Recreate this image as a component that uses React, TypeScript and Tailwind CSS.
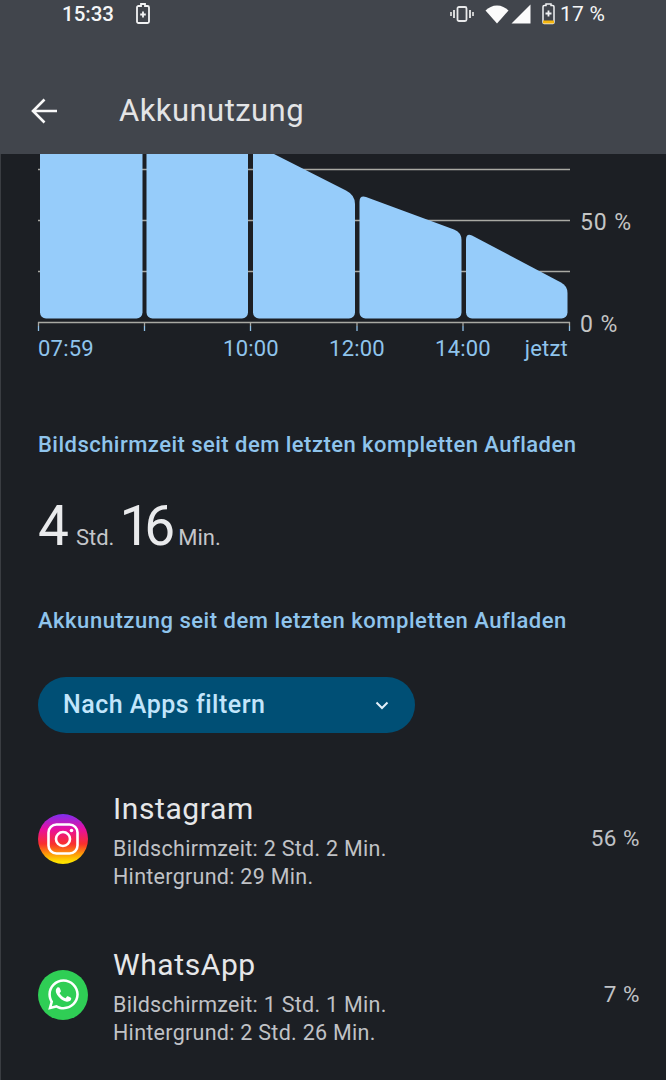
import { FaWhatsapp } from "react-icons/fa";

const sans = "font-['Roboto',sans-serif]";

function BatteryCharging() {
  return (
    <svg width="14" height="22" viewBox="0 0 14 22" fill="none">
      <path d="M5 1h4v2h2.500c.8 0 1.500.7 1.500 1.500v14c0 .8-.7 1.500-1.500 1.500h-9C1.700 20 1 19.300 1 18.500v-14C1 3.700 1.700 3 2.500 3H5z" stroke="#f2f3f4" strokeWidth="1.800" />
      <path d="M7 8.500v6M4.200 11.500h5.600" stroke="#f2f3f4" strokeWidth="1.800" />
    </svg>
  );
}

function StatusRight() {
  return (
    <div className="flex items-center">
      <svg width="24" height="16" viewBox="0 0 24 16" fill="none" className="mr-[11px]">
        <rect x="7.500" y="1" width="9" height="14" rx="1.500" stroke="#e8e9ea" strokeWidth="1.800" />
        <path d="M4 4v8M20 4v8" stroke="#d8d9da" strokeWidth="2" />
        <path d="M1 6v4M23 6v4" stroke="#c8c9ca" strokeWidth="2" />
      </svg>
      <svg width="24" height="19" viewBox="0 0 24 19" className="mr-[2px]">
        <path d="M12 18.500 0.500 5.500C3.500 2.500 7.500 .500 12 .500s8.500 2 11.500 5z" fill="#fbfbfb" />
      </svg>
      <svg width="20" height="20" viewBox="0 0 20 20" className="mr-[11px]">
        <path d="M19.500 .500V19.500H.500z" fill="#fbfbfb" />
      </svg>
      <svg width="13" height="22" viewBox="0 0 13 22" fill="none" className="mr-[5px]">
        <path d="M4 1h5v1.500h1.800c.7 0 1.200.5 1.200 1.200v15.600c0 .7-.5 1.200-1.200 1.200H2.200c-.7 0-1.200-.5-1.200-1.200V3.700c0-.7.5-1.200 1.200-1.200H4z" stroke="#f0f1f2" strokeWidth="1.500" />
        <rect x="1" y="17.500" width="11" height="3" fill="#f5b60f" />
        <path d="M6.500 7.500v6M3.500 10.500h6" stroke="#f0f1f2" strokeWidth="1.800" />
      </svg>
      <span className="text-[21px] leading-none text-[#f5f6f7] tracking-[0.2px]">17 %</span>
    </div>
  );
}

function Chart() {
  const grid = [169.5, 220.5, 271.5];
  const ticks = [38.5, 144.5, 250.5, 357, 463, 569.5];
  const labels: [number, string, "start" | "middle" | "end"][] = [
    [38, "07:59", "start"],
    [251, "10:00", "middle"],
    [357, "12:00", "middle"],
    [463, "14:00", "middle"],
    [568, "jetzt", "end"],
  ];
  return (
    <svg width="666" height="210" viewBox="0 154 666 210" className="block" style={{ fontFamily: "Roboto, sans-serif" }}>
      {grid.map((y) => (
        <line key={y} x1="38" x2="570" y1={y} y2={y} stroke="#a9a9a3" strokeWidth="1.500" />
      ))}
      <line x1="38" x2="570" y1="322.500" y2="322.500" stroke="#a9a9a3" strokeWidth="1.500" />
      {ticks.map((x) => (
        <g key={x}>
          <line x1={x} x2={x} y1="322" y2="326" stroke="#a9a9a3" strokeWidth="1.300" />
          <line x1={x} x2={x} y1="326" y2="331" stroke="#8fbfe6" strokeWidth="1.300" />
        </g>
      ))}
      <g fill="#96ccfa">
        <path d="M40 154H142.500V312.500a6 6 0 0 1-6 6H46a6 6 0 0 1-6-6z" />
        <path d="M146.500 154H248V312.500a6 6 0 0 1-6 6H152.500a6 6 0 0 1-6-6z" />
        <path d="M253 154H274L346 190.500Q355 195 355 204V312.500a6 6 0 0 1-6 6H259a6 6 0 0 1-6-6z" />
        <path d="M359.500 202Q359.500 195 366 197L454 229.500Q461.500 232.500 461.500 240V312.500a6 6 0 0 1-6 6H365.500a6 6 0 0 1-6-6z" />
        <path d="M466 240Q466 233 472 235.500L561 282.500Q567.500 286 567.500 293V312.500a6 6 0 0 1-6 6H472a6 6 0 0 1-6-6z" />
      </g>
      {labels.map(([x, t, a]) => (
        <text key={t} x={x} y="356" textAnchor={a} fontSize="22" fill="#8fc4ec" letterSpacing="0.2">
          {t}
        </text>
      ))}
      <text x="580" y="230" fontSize="23" fill="#c4c5c5" letterSpacing="0.9">50 %</text>
      <text x="580" y="332" fontSize="23" fill="#c4c5c5" letterSpacing="0.9">0 %</text>
    </svg>
  );
}

function InstagramIcon() {
  return (
    <svg width="50" height="50" viewBox="0 0 50 50" className="shrink-0 mb-[4px]">
      <defs>
        <linearGradient id="ig" x1="0.500" y1="0" x2="0.500" y2="1">
          <stop offset="0" stopColor="#7d2ff0" />
          <stop offset="0.300" stopColor="#e80fa0" />
          <stop offset="0.600" stopColor="#f9302c" />
          <stop offset="0.800" stopColor="#fd9a08" />
          <stop offset="0.950" stopColor="#ffe000" />
        </linearGradient>
      </defs>
      <circle cx="25" cy="25" r="25" fill="url(#ig)" />
      <rect x="10.500" y="10.500" width="29" height="29" rx="8" fill="none" stroke="#fff" strokeWidth="2.600" />
      <circle cx="25" cy="25" r="7" fill="none" stroke="#fff" strokeWidth="2.600" />
      <circle cx="33.500" cy="16.500" r="1.800" fill="#fff" />
    </svg>
  );
}

function WhatsAppIcon() {
  return (
    <div className="w-[50px] h-[50px] shrink-0 mb-[4px] rounded-full bg-[#2fce55] flex items-center justify-center">
      <FaWhatsapp size={35} color="#ffffff" />
    </div>
  );
}

function AppRow({ icon, name, l1, l2, pct, cls }: { icon: React.ReactNode; name: string; l1: string; l2: string; pct: string; cls: string }) {
  return (
    <div className={`flex items-center pl-[38px] pr-[26px] ${cls}`}>
      {icon}
      <div className="ml-[25px] flex-1">
        <div className="text-[30px] leading-[38px] text-[#e6e7e9] tracking-[0.6px]">{name}</div>
        <div className="text-[21.500px] leading-[28px] text-[#c0c2c6] tracking-[0.28px] mt-[7px]">{l1}</div>
        <div className="text-[21.500px] leading-[28px] text-[#c0c2c6] tracking-[0.28px]">{l2}</div>
      </div>
      <div className="text-[22.500px] leading-[28px] text-[#c0c2c6] tracking-[0.5px] self-start mt-[34px]">{pct}</div>
    </div>
  );
}

export default function App() {
  return (
    <div className={`w-[666px] h-[1080px] overflow-hidden bg-[#1c1f24] shadow-[inset_1px_0_0_#3a3d42] ${sans}`}>
      <header className="h-[154px] bg-[#41454c] flex flex-col">
        <div className="h-[28px] flex items-center justify-between pl-[62px] pr-[61px]">
          <div className="flex items-center">
            <span className="text-[20.500px] leading-none font-medium text-[#f5f6f7]">15:33</span>
            <span className="ml-[22px] flex"><BatteryCharging /></span>
          </div>
          <StatusRight />
        </div>
        <div className="flex items-center pl-[31px] mt-[63px]">
          <svg width="27" height="26" viewBox="0 0 27 26" fill="none">
            <path d="M26 13H2M13.500 1.500 2 13l11.500 11.500" stroke="#f8f8f8" strokeWidth="2.600" />
          </svg>
          <h1 className="ml-[61px] text-[31px] leading-[40px] text-[#e3e4e6] tracking-[0.45px]">Akkunutzung</h1>
        </div>
      </header>
      <Chart />
      <section className="pl-[38px]">
        <div className="mt-[67px] text-[22px] leading-[28px] font-medium text-[#8fc4ec] tracking-[0.47px]">
          Bildschirmzeit seit dem letzten kompletten Aufladen
        </div>
        <div className="mt-[35px] flex items-baseline text-[#e9eaec]">
          <span className="text-[55px] leading-[64px]">4</span>
          <span className="ml-[7px] text-[22px] text-[#c4c6ca]">Std.</span>
          <span className="ml-[5px] text-[55px] leading-[64px] tracking-[-6px]">16</span>
          <span className="ml-[9px] text-[22px] text-[#c4c6ca]">Min.</span>
        </div>
        <div className="mt-[49px] text-[22px] leading-[28px] font-medium text-[#8fc4ec] tracking-[0.53px]">
          Akkunutzung seit dem letzten kompletten Aufladen
        </div>
        <div className="mt-[42px] w-[377px] h-[56px] rounded-full bg-[#004f75] flex items-center justify-between pl-[25px] pr-[26px]">
          <span className="text-[25px] font-medium text-[#c2e5fb] tracking-[0.5px]">Nach Apps filtern</span>
          <svg width="14" height="9" viewBox="0 0 14 9" fill="none">
            <path d="M1.500 1.500 7 7l5.500-5.500" stroke="#e2effa" strokeWidth="2" />
          </svg>
        </div>
      </section>
      <AppRow icon={<InstagramIcon />} name="Instagram" l1="Bildschirmzeit: 2 Std. 2 Min." l2="Hintergrund: 29 Min." pct="56 %" cls="mt-[57px]" />
      <AppRow icon={<WhatsAppIcon />} name="WhatsApp" l1="Bildschirmzeit: 1 Std. 1 Min." l2="Hintergrund: 2 Std. 26 Min." pct="7 %" cls="mt-[55px]" />
    </div>
  );
}
